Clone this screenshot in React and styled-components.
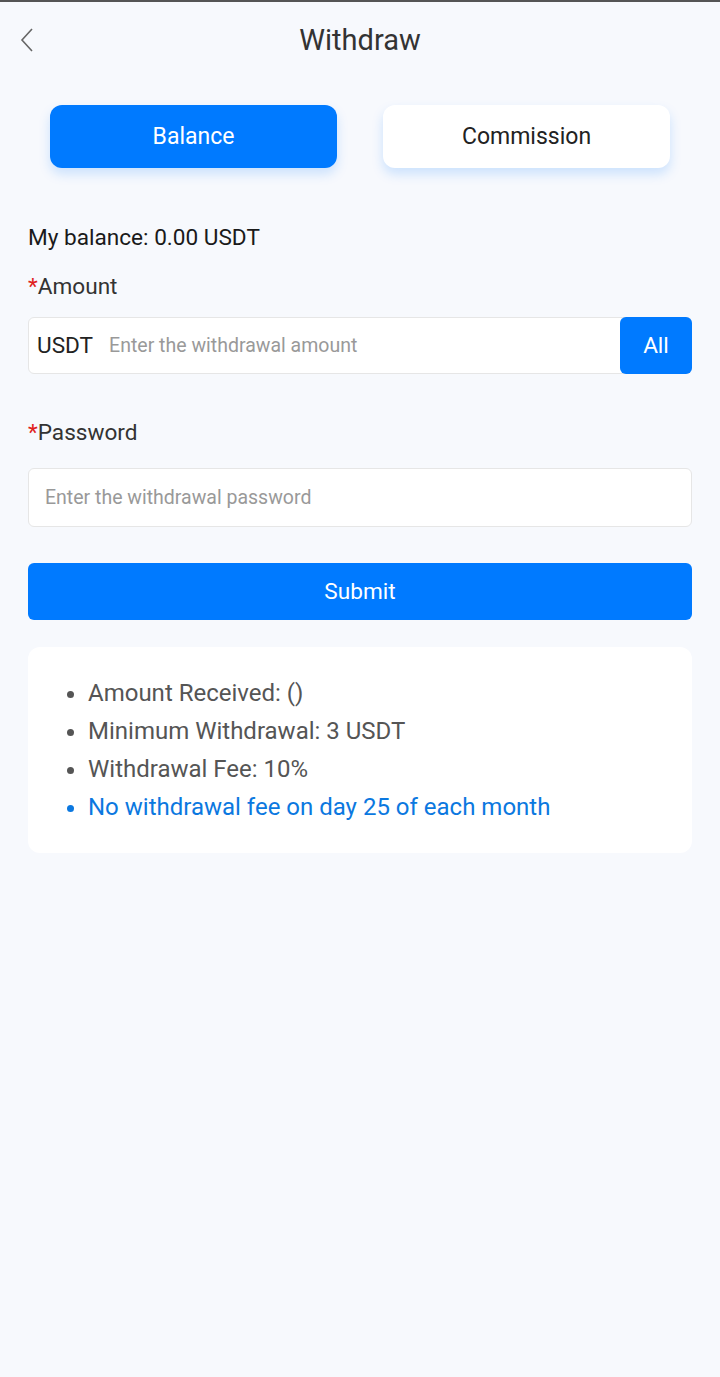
import React, { useState } from "react";
import styled, { createGlobalStyle } from "styled-components";

const GlobalStyle = createGlobalStyle`
  html, body {
    margin: 0;
    padding: 0;
    background: #f7f9fd;
  }
  body {
    font-family: Roboto, "Noto Sans", Arial, sans-serif;
  }
  * {
    box-sizing: border-box;
  }
`;

const Page = styled.div`
  min-height: 1377px;
  background: #f7f9fd;
  border-top: 2px solid #555;
`;

const Header = styled.header`
  position: relative;
  height: 76px;
  display: flex;
  align-items: center;
  justify-content: center;
`;

const BackButton = styled.button`
  position: absolute;
  left: 13px;
  top: 22px;
  width: 28px;
  height: 32px;
  padding: 0;
  border: none;
  background: transparent;
  display: flex;
  align-items: center;
  justify-content: center;
  cursor: pointer;
`;

const Title = styled.h1`
  margin: 0;
  font-size: 29px;
  font-weight: 400;
  color: #333;
`;

const Tabs = styled.div`
  display: grid;
  grid-template-columns: 1fr 1fr;
  gap: 46px;
  padding: 27px 50px 0;
`;

const Tab = styled.button`
  height: 63px;
  border: none;
  border-radius: 12px;
  font-family: inherit;
  font-size: 23px;
  cursor: pointer;
  background: ${(p) => (p.$active ? "#007aff" : "#fff")};
  color: ${(p) => (p.$active ? "#fff" : "#222")};
  box-shadow: 0 6px 12px rgba(0, 122, 255, 0.18);
`;

const Content = styled.main`
  padding: 56px 28px 0;
`;

const Balance = styled.div`
  font-size: 22.6px;
  color: #1a1a1a;
  line-height: 28px;
`;

const Label = styled.div`
  font-size: 22.6px;
  color: #333;
  line-height: 28px;
  margin-top: ${(p) => p.$top}px;
  margin-bottom: ${(p) => p.$bottom}px;

  span {
    color: #e02020;
  }
`;

const InputRow = styled.div`
  display: flex;
  align-items: stretch;
  height: 57px;
  background: #fff;
  border: 1px solid #e6e6e6;
  border-radius: 6px;
`;

const Unit = styled.div`
  display: flex;
  align-items: center;
  padding: 0 16px 0 8px;
  font-size: 22.6px;
  color: #222;
`;

const Field = styled.input`
  flex: 1;
  min-width: 0;
  border: none;
  outline: none;
  background: transparent;
  font-family: inherit;
  font-size: 19.5px;
  color: #333;
  padding: ${(p) => (p.$pad ? "0 16px" : "0")};

  &::placeholder {
    color: #999;
  }
`;

const AllButton = styled.button`
  width: 72px;
  margin: -1px -1px -1px 0;
  border: none;
  border-radius: 6px;
  background: #007aff;
  color: #fff;
  font-family: inherit;
  font-size: 22.6px;
  cursor: pointer;
`;

const PasswordBox = styled(InputRow)`
  height: 59px;
`;

const Submit = styled.button`
  display: block;
  width: 100%;
  height: 57px;
  margin-top: 36px;
  border: none;
  border-radius: 6px;
  background: #007aff;
  color: #fff;
  font-family: inherit;
  font-size: 22.6px;
  cursor: pointer;
`;

const InfoCard = styled.ul`
  margin: 27px 0 0;
  padding: 27px 20px 27px 60px;
  list-style: disc;
  background: #fff;
  border-radius: 12px;
`;

const InfoItem = styled.li`
  font-size: 24px;
  line-height: 38px;
  color: ${(p) => (p.$highlight ? "#0b78e0" : "#555")};
`;

const notes = [
  { text: "Amount Received: ()" },
  { text: "Minimum Withdrawal: 3 USDT" },
  { text: "Withdrawal Fee: 10%" },
  { text: "No withdrawal fee on day 25 of each month", highlight: true },
];

const App = () => {
  const [tab, setTab] = useState("balance");
  const [amount, setAmount] = useState("");
  const [password, setPassword] = useState("");

  return (
    <Page>
      <GlobalStyle />
      <Header>
        <BackButton aria-label="Back">
          <svg width="14" height="26" viewBox="0 0 14 26" fill="none">
            <path d="M12 2 L2 13 L12 24" stroke="#666" strokeWidth="1.6" />
          </svg>
        </BackButton>
        <Title>Withdraw</Title>
      </Header>

      <Tabs>
        <Tab $active={tab === "balance"} onClick={() => setTab("balance")}>
          Balance
        </Tab>
        <Tab $active={tab === "commission"} onClick={() => setTab("commission")}>
          Commission
        </Tab>
      </Tabs>

      <Content>
        <Balance>My balance: 0.00 USDT</Balance>

        <Label $top={21} $bottom={16}>
          <span>*</span>Amount
        </Label>
        <InputRow>
          <Unit>USDT</Unit>
          <Field
            placeholder="Enter the withdrawal amount"
            value={amount}
            onChange={(e) => setAmount(e.target.value)}
          />
          <AllButton onClick={() => setAmount("0.00")}>All</AllButton>
        </InputRow>

        <Label $top={45} $bottom={21}>
          <span>*</span>Password
        </Label>
        <PasswordBox>
          <Field
            $pad
            type="password"
            placeholder="Enter the withdrawal password"
            value={password}
            onChange={(e) => setPassword(e.target.value)}
          />
        </PasswordBox>

        <Submit>Submit</Submit>

        <InfoCard>
          {notes.map((n) => (
            <InfoItem key={n.text} $highlight={n.highlight}>
              {n.text}
            </InfoItem>
          ))}
        </InfoCard>
      </Content>
    </Page>
  );
};

export default App;
